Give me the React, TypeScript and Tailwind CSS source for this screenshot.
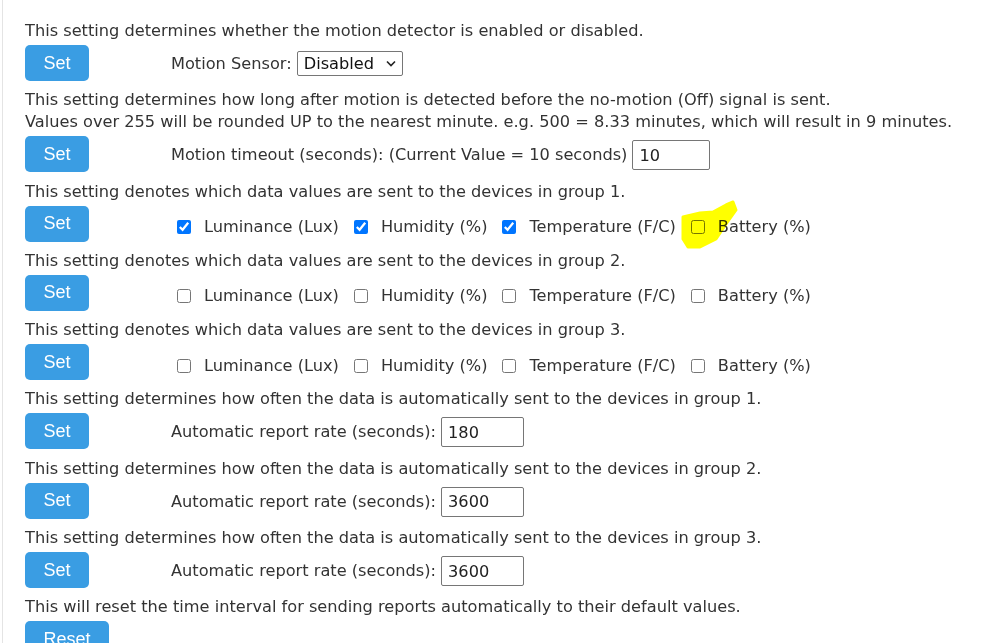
import { ReactNode } from "react";

function SetButton({ label = "Set", wide = false }: { label?: string; wide?: boolean }) {
    return (
        <button
            className={
                "h-[36px] rounded-[5px] bg-[#3a9de3] text-white text-[18px] font-['Liberation_Sans',Arial,sans-serif] " +
                (wide ? "w-[84px]" : "w-[64px]")
            }
        >
            {label}
        </button>
    );
}

function Row({ children, low = false }: { children: ReactNode; low?: boolean }) {
    return (
        <div className="flex flex-row items-center h-[36px] mt-[5px] mb-[6.3px]">
            <SetButton />
            <div className={"ml-[82px] flex flex-row items-center " + (low ? "pt-[7px]" : "pt-[2px]")}>
                {children}
            </div>
        </div>
    );
}

function Check({ label, checked }: { label: string; checked?: boolean }) {
    return (
        <label className="flex flex-row items-center mr-[9px]">
            <input
                type="checkbox"
                defaultChecked={checked}
                className="w-[14px] h-[14px] mx-[6px] accent-[#0075ff]"
            />
            <span className="ml-[7px]">{label}</span>
        </label>
    );
}

function Line({ children }: { children: ReactNode }) {
    return <div className="leading-[26px] h-[22px] whitespace-nowrap">{children}</div>;
}

function TextBox({ value, w }: { value: string; w: string }) {
    return (
        <input
            type="text"
            defaultValue={value}
            className={"ml-[5px] h-[30px] border border-[#767676] rounded-[2px] px-[6px] text-[#222] " + w}
        />
    );
}

const groups = [
    { n: 1, checks: [true, true, true, false] },
    { n: 2, checks: [false, false, false, false] },
    { n: 3, checks: [false, false, false, false] },
];

const labels = ["Luminance (Lux)", "Humidity (%)", "Temperature (F/C)", "Battery (%)"];

export default function App() {
    return (
        <div className="relative w-[1000px] h-[643px] overflow-hidden bg-white">
            <div className="ml-[2px] h-full border-l border-[#e4e4e4] pl-[22px] pt-[18px] text-[16.2px] text-[#333333] font-['DejaVu_Sans',Tahoma,sans-serif]">
                <Line>This setting determines whether the motion detector is enabled or disabled.</Line>
                <Row>
                    <span>Motion Sensor:</span>
                    <div className="relative ml-[5px]">
                        <select
                            defaultValue="Disabled"
                            className="appearance-none h-[25px] w-[106px] border border-[#767676] rounded-[2px] text-[#111] pl-[6px] bg-white"
                        >
                            <option>Disabled</option>
                            <option>Enabled</option>
                        </select>
                        <svg
                            className="absolute right-[7px] top-[9px] pointer-events-none"
                            width="10"
                            height="7"
                            viewBox="0 0 10 7"
                        >
                            <path d="M1 1.5 L5 5.5 L9 1.5" fill="none" stroke="#222" strokeWidth="1.6" />
                        </svg>
                    </div>
                </Row>
                <Line>This setting determines how long after motion is detected before the no-motion (Off) signal is sent.</Line>
                <Line>
                    Values over 255 will be rounded UP to the nearest minute. e.g. 500 = 8.33 minutes, which will result in 9 minutes.
                </Line>
                <Row>
                    <span>Motion timeout (seconds): (Current Value = 10 seconds)</span>
                    <TextBox value="10" w="w-[78px]" />
                </Row>
                {groups.map((g) => (
                    <div key={g.n}>
                        <Line>This setting denotes which data values are sent to the devices in group {g.n}.</Line>
                        <Row low>
                            {labels.map((l, i) => (
                                <Check key={l} label={l} checked={g.checks[i]} />
                            ))}
                        </Row>
                    </div>
                ))}
                {[
                    { n: 1, v: "180" },
                    { n: 2, v: "3600" },
                    { n: 3, v: "3600" },
                ].map((r) => (
                    <div key={r.n}>
                        <Line>This setting determines how often the data is automatically sent to the devices in group {r.n}.</Line>
                        <Row>
                            <span>Automatic report rate (seconds):</span>
                            <TextBox value={r.v} w="w-[83px]" />
                        </Row>
                    </div>
                ))}
                <Line>This will reset the time interval for sending reports automatically to their default values.</Line>
                <div className="mt-[5px]">
                    <SetButton label="Reset" wide />
                </div>
            </div>
            <svg
                className="absolute left-0 top-0 pointer-events-none mix-blend-multiply"
                width="1000"
                height="643"
                viewBox="0 0 1000 643"
            >
                <path
                    d="M683 217 L700 213 L713 212 L726 205 L733 202 L736 210 L726 224 L716 239 L700 247 L688 247 L683 239 Z"
                    fill="#ffff00"
                    stroke="#ffff00"
                    strokeWidth="3"
                    strokeLinejoin="round"
                />
            </svg>
        </div>
    );
}
